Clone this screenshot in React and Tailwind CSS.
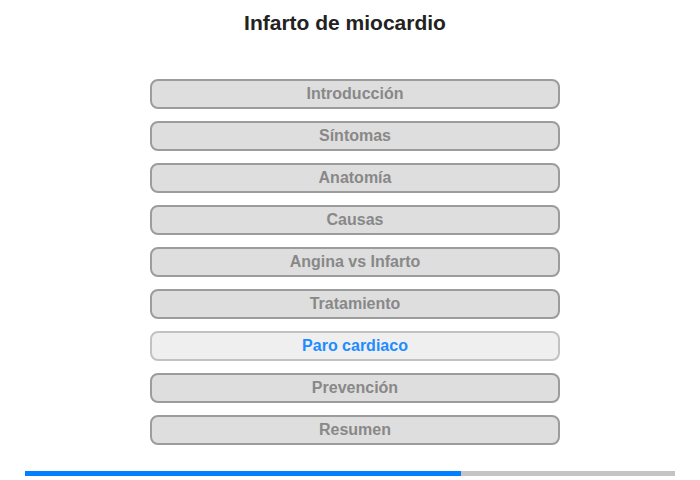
import React from 'react';

const sections = [
  'Introducción',
  'Síntomas',
  'Anatomía',
  'Causas',
  'Angina vs Infarto',
  'Tratamiento',
  'Paro cardiaco',
  'Prevención',
  'Resumen',
];

const active = 'Paro cardiaco';

export default function App() {
  return (
    <div className="w-[700px] h-[480px] bg-white font-['Liberation_Sans',Arial,sans-serif] overflow-hidden">
      {/* Title */}
      <div className="pt-[9px] pr-[10px] text-center">
        <h1 className="text-[21px] leading-[28px] font-bold text-[#222]">Infarto de miocardio</h1>
      </div>

      {/* Menu */}
      <div className="mt-[42px] ml-[150px] w-[410px] flex flex-col gap-[12px]">
        {sections.map((s) => (
          <button
            key={s}
            className={
              s === active
                ? 'h-[30px] rounded-[8px] border-2 border-[#c2c2c2] bg-[#efefef] text-[#1e8cff] text-[16px] font-bold'
                : 'h-[30px] rounded-[8px] border-2 border-[#9c9c9c] bg-[#dedede] text-[#888] text-[16px] font-bold'
            }
          >
            {s}
          </button>
        ))}
      </div>

      {/* Progress */}
      <div className="mt-[26px] ml-[25px] w-[650px] h-[5px] bg-[#c4c4c4] flex">
        <div className="h-full bg-[#0080ff]" style={{ width: '436px' }} />
      </div>
    </div>
  );
}
